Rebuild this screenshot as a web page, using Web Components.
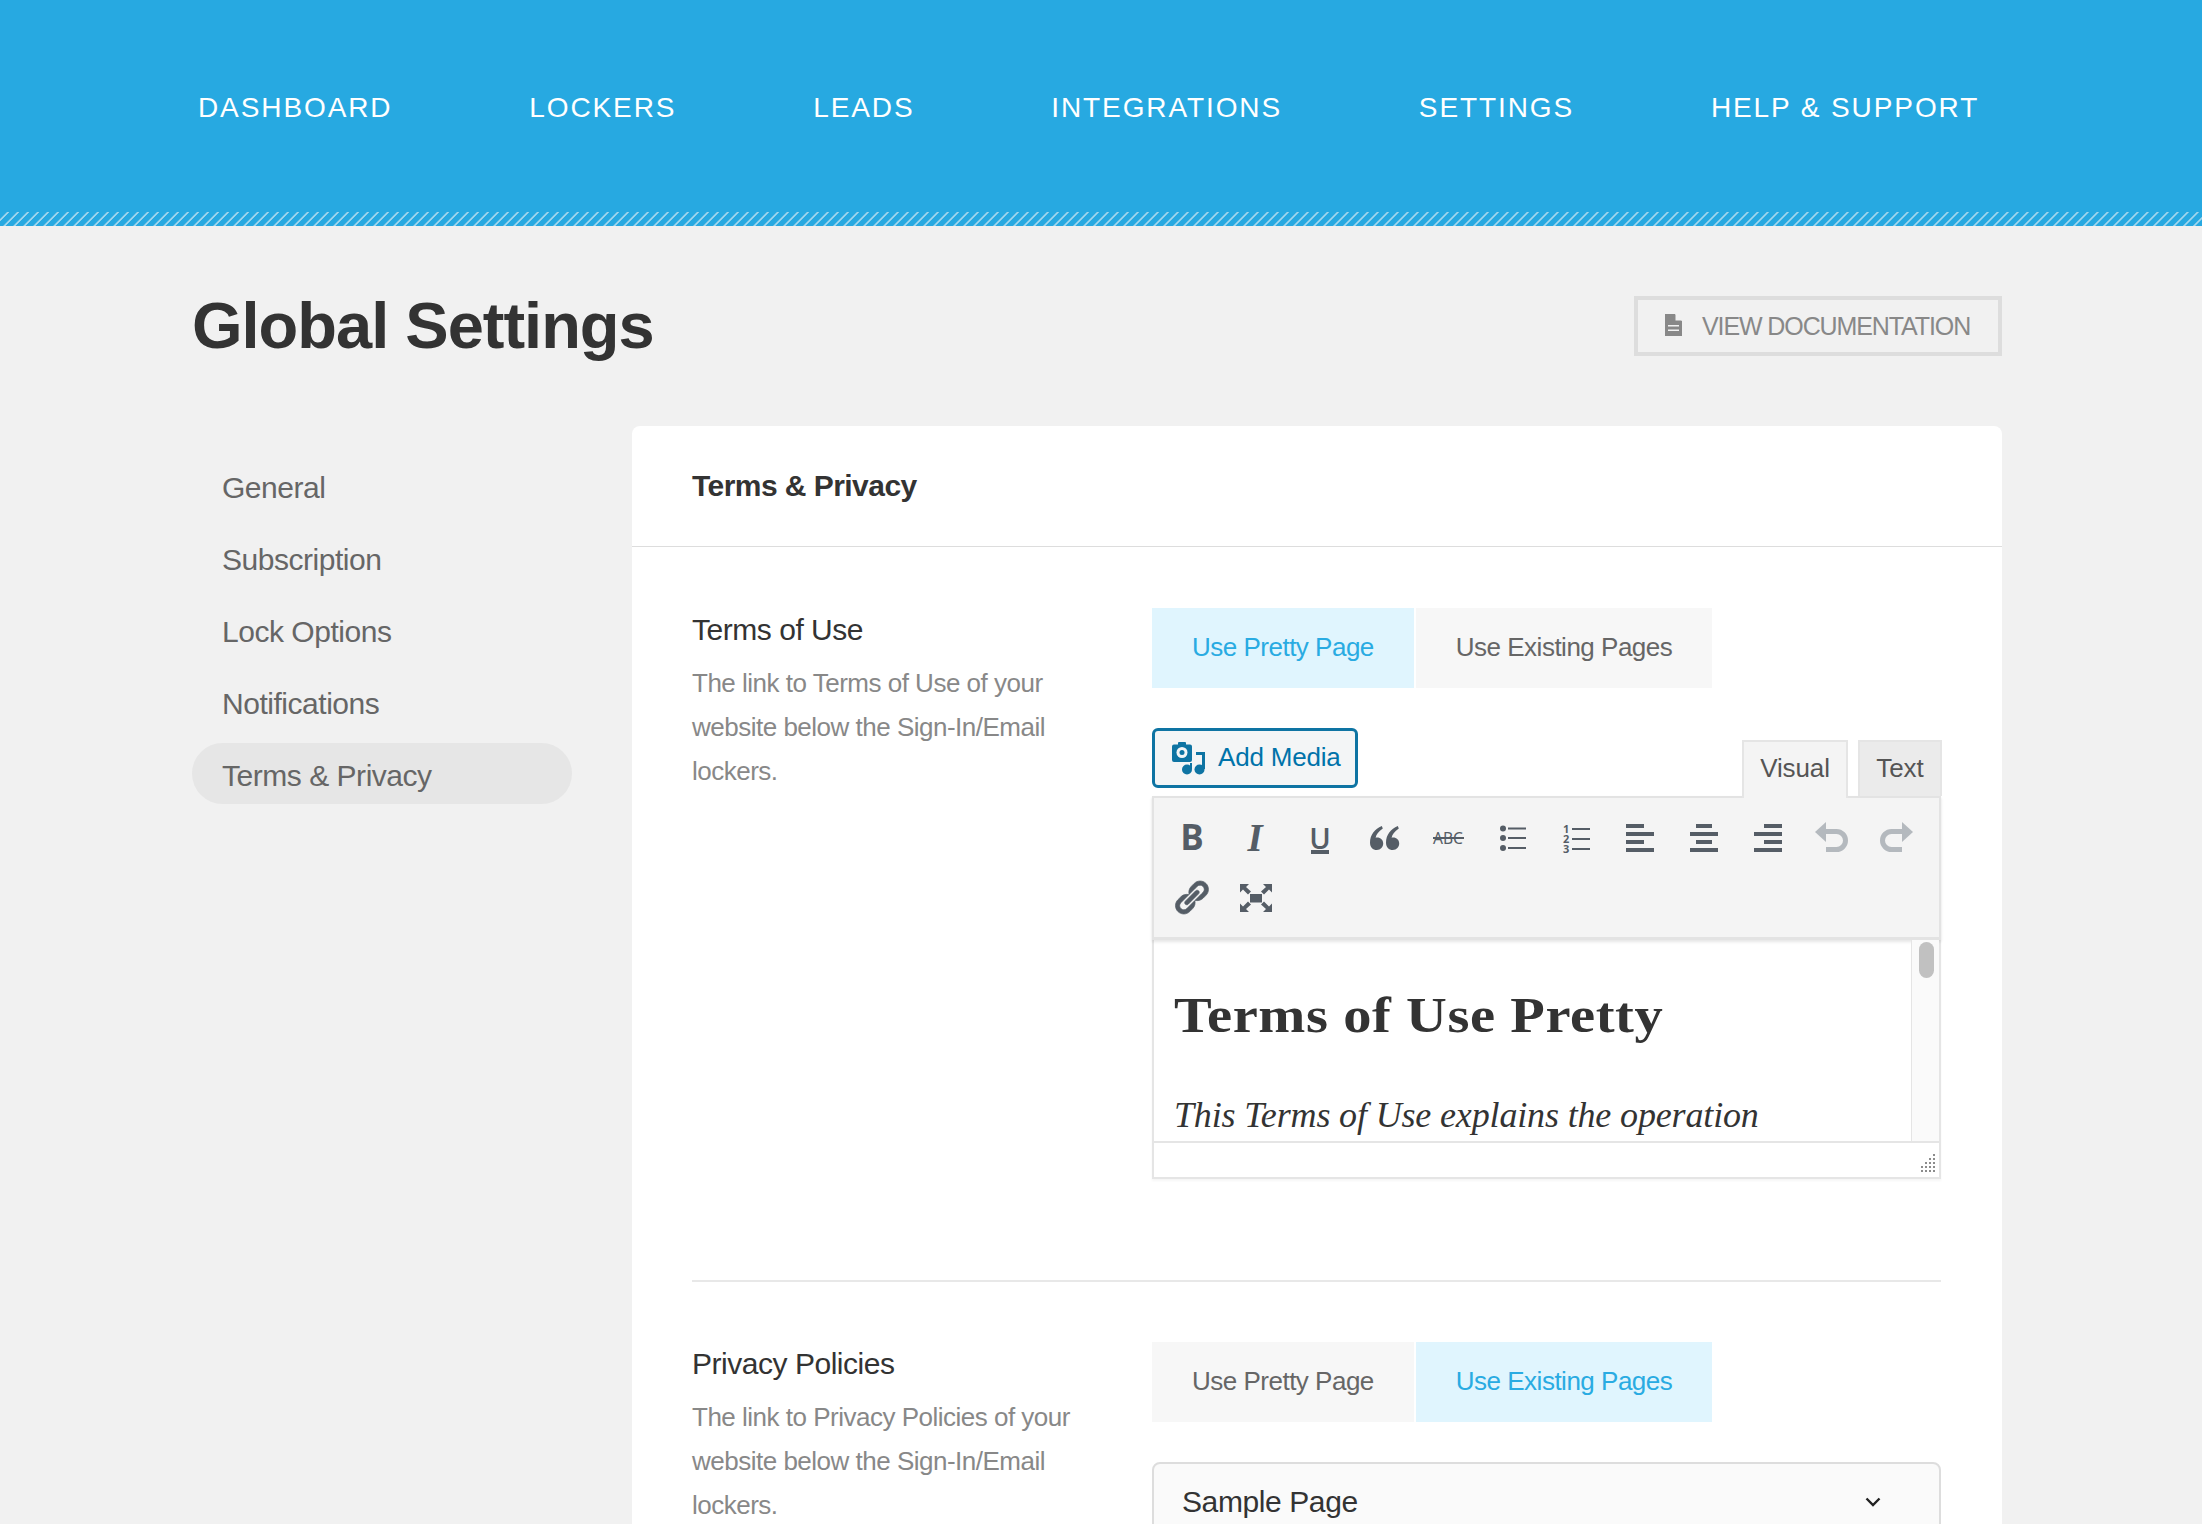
<!DOCTYPE html>
<html>
<head>
<meta charset="utf-8">
<title>Global Settings</title>
<style>
  html, body { margin: 0; height: 1524px; overflow: hidden; background: #f1f1f1; }
  body { font-family: "Liberation Sans", Arial, sans-serif; color: #333; }
</style>
</head>
<body>
<site-header></site-header>
<page-main>
  <page-title slot="title" doc-label="VIEW DOCUMENTATION">Global Settings</page-title>
  <side-menu slot="menu"></side-menu>
  <settings-card slot="card" heading="Terms &amp; Privacy">
    <setting-row label="Terms of Use" desc="The link to Terms of Use of your website below the Sign-In/Email lockers.">
      <choice-tabs active="0"></choice-tabs>
      <wp-editor></wp-editor>
    </setting-row>
    <setting-row label="Privacy Policies" desc="The link to Privacy Policies of your website below the Sign-In/Email lockers." divider>
      <choice-tabs active="1"></choice-tabs>
      <page-select value="Sample Page"></page-select>
    </setting-row>
  </settings-card>
</page-main>

<script>
/**
 * Top bar with the main navigation and the striped lower edge
 */
class SiteHeader extends HTMLElement {
  connectedCallback() {
    const items = ['DASHBOARD', 'LOCKERS', 'LEADS', 'INTEGRATIONS', 'SETTINGS', 'HELP & SUPPORT'];
    this.attachShadow({ mode: 'open' }).innerHTML = `
      <style>
        :host { display: block; background: #27a9e1; }
        nav {
          height: 212px;
          padding: 3px 0 0 198px;
          display: flex;
          align-items: center;
          gap: 136.8px;
          box-sizing: border-box;
        }
        a {
          color: #fff;
          font-size: 28px;
          letter-spacing: 1.9px;
          white-space: nowrap;
        }
        .stripes {
          height: 14px;
          background: repeating-linear-gradient(135deg, #27a9e1 0, #27a9e1 4.6px, #a3d6ec 5.4px, #a3d6ec 6.3px, #27a9e1 7.07px);
        }
      </style>
      <nav>${items.map((item) => `<a>${item.replace('&', '&amp;')}</a>`).join('')}</nav>
      <div class="stripes"></div>
    `;
  }
}

/**
 * Page body: title on top, then menu and card side by side
 */
class PageMain extends HTMLElement {
  constructor() {
    super();
    this.attachShadow({ mode: 'open' }).innerHTML = `
      <style>
        :host { display: block; padding: 70px 200px 0 192px; }
        .columns {
          display: grid;
          grid-template-columns: 380px 1370px;
          column-gap: 60px;
          margin-top: 70px;
          align-items: start;
        }
      </style>
      <slot name="title"></slot>
      <div class="columns">
        <slot name="menu"></slot>
        <slot name="card"></slot>
      </div>
    `;
  }
}

class PageTitle extends HTMLElement {
  connectedCallback() {
    const label = this.getAttribute('doc-label');
    this.attachShadow({ mode: 'open' }).innerHTML = `
      <style>
        :host { display: flex; justify-content: space-between; align-items: center; height: 60px; }
        h1 { margin: 0; font-size: 65px; line-height: 60px; color: #333; letter-spacing: -1px; }
        a {
          box-sizing: border-box;
          width: 368px;
          height: 60px;
          border: 4px solid #ddd;
          display: flex;
          align-items: center;
          padding-left: 27px;
          gap: 20px;
          color: #888;
          font-size: 25px;
          letter-spacing: -1.1px;
          white-space: nowrap;
        }
        svg { flex: none; margin-top: -2px; }
      </style>
      <h1><slot></slot></h1>
      <a>
        <svg width="17" height="22" viewBox="0 0 17 22">
          <path fill="#888" d="M0 0h10l7 7v15H0z"/>
          <path fill="#f1f1f1" d="M10.5 0v6.500H17V5.600L11.500 0zM3 11h11v1.600H3zM3 15.500h11v1.600H3z"/>
        </svg>
        ${label}
      </a>
    `;
  }
}

class SideMenu extends HTMLElement {
  connectedCallback() {
    const items = ['General', 'Subscription', 'Lock Options', 'Notifications', 'Terms & Privacy'];
    this.attachShadow({ mode: 'open' }).innerHTML = `
      <style>
        :host { display: flex; flex-direction: column; gap: 11px; padding-top: 29px; }
        a {
          height: 61px;
          line-height: 65px;
          padding-left: 30px;
          border-radius: 31px;
          color: #666;
          font-size: 30px;
          letter-spacing: -0.47px;
        }
        a.active { background: #e6e6e6; }
      </style>
      ${items
        .map((item, i) => `<a class="${i === 4 ? 'active' : ''}">${item.replace('&', '&amp;')}</a>`)
        .join('')}
    `;
  }
}

class SettingsCard extends HTMLElement {
  connectedCallback() {
    this.attachShadow({ mode: 'open' }).innerHTML = `
      <style>
        :host { display: block; background: #fff; border-radius: 8px 8px 0 0; }
        header {
          height: 121px;
          box-sizing: border-box;
          padding: 0 60px;
          display: flex;
          align-items: center;
          font-size: 30px;
          font-weight: bold;
          letter-spacing: -0.55px;
          color: #333;
          border-bottom: 1px solid #ddd;
        }
        .body { padding: 0 61px 0 60px; }
      </style>
      <header>${this.getAttribute('heading').replace('&', '&amp;')}</header>
      <div class="body"><slot></slot></div>
    `;
  }
}

class SettingRow extends HTMLElement {
  connectedCallback() {
    this.attachShadow({ mode: 'open' }).innerHTML = `
      <style>
        :host {
          display: grid;
          grid-template-columns: 460px 789px;
          padding: 60px 0 101px;
        }
        :host([divider]) { border-top: 2px solid #e8e8e8; padding-top: 59px; }
        h3 {
          margin: 0 0 8px;
          font-size: 30px;
          font-weight: normal;
          line-height: 46px;
          letter-spacing: -0.47px;
          color: #333;
        }
        p {
          margin: 0;
          width: 400px;
          font-size: 26px;
          line-height: 44px;
          letter-spacing: -0.5px;
          color: #888;
        }
        .controls { display: flex; flex-direction: column; }
      </style>
      <div class="about">
        <h3>${this.getAttribute('label')}</h3>
        <p>${this.getAttribute('desc')}</p>
      </div>
      <div class="controls"><slot></slot></div>
    `;
  }
}

class ChoiceTabs extends HTMLElement {
  connectedCallback() {
    const active = Number(this.getAttribute('active'));
    const labels = ['Use Pretty Page', 'Use Existing Pages'];
    this.attachShadow({ mode: 'open' }).innerHTML = `
      <style>
        :host { display: flex; gap: 2px; margin-top: 1px; }
        button {
          all: unset;
          height: 80px;
          padding: 0 40px 2px;
          box-sizing: border-box;
          background: #f7f7f7;
          color: #666;
          font-size: 26px;
          letter-spacing: -0.5px;
          white-space: nowrap;
        }
        button.on { background: #e0f5fe; color: #29abe2; }
      </style>
      ${labels.map((l, i) => `<button class="${i === active ? 'on' : ''}">${l}</button>`).join('')}
    `;
  }
}

// Toolbar icons, drawn in a 28x28 box
const TOOL_ICONS = {
  bold: `<text x="14" y="26" text-anchor="middle" font-family="Open Sans" font-weight="700" font-size="35">B</text>`,
  italic: `<text x="13" y="27" text-anchor="middle" font-family="Liberation Serif" font-weight="700" font-style="italic" font-size="39">I</text>`,
  underline: `<text x="14" y="25" text-anchor="middle" font-family="Open Sans" font-weight="600" font-size="29">U</text><rect x="5" y="26" width="18" height="4"/>`,
  quote: `<g transform="translate(-5.600 -6) scale(2)"><path d="M8.700 4C5.200 5.600 2.800 8.400 2.800 12.200c0 2.400 1.400 3.800 3.400 3.800 1.900 0 3.200-1.400 3.200-3.200 0-1.800-1.300-3-3-3-.3 0-.6 0-.8.1.3-1.600 1.500-3.200 3.600-4.600z"/><path transform="translate(8 0)" d="M8.700 4C5.200 5.600 2.800 8.400 2.800 12.200c0 2.400 1.400 3.800 3.400 3.800 1.900 0 3.200-1.400 3.200-3.200 0-1.800-1.300-3-3-3-.3 0-.6 0-.8.1.3-1.600 1.500-3.200 3.600-4.600z"/></g>`,
  strike: `<text x="14" y="20" text-anchor="middle" font-family="Noto Sans" font-size="17" textLength="30" lengthAdjust="spacingAndGlyphs">ABC</text><rect x="-1" y="13" width="31" height="2"/>`,
  bullets: `<circle cx="5" cy="4.500" r="3"/><circle cx="5" cy="14" r="3"/><circle cx="5" cy="24" r="3"/><rect x="10" y="3.500" width="18" height="2"/><rect x="10" y="13" width="18" height="2"/><rect x="10" y="23" width="18" height="2"/>`,
  numbers: `<text x="1 1 1" y="9 19 29" font-family="Open Sans" font-weight="700" font-size="11">123</text><rect x="10" y="4" width="18" height="2"/><rect x="10" y="14" width="18" height="2"/><rect x="10" y="24" width="18" height="2"/>`,
  left: `<path d="M0 0h18v4H0zM0 8h28v4H0zM0 16h18v4H0zM0 24h28v4H0z"/>`,
  center: `<path d="M6 0h16v4H6zM0 8h28v4H0zM6 16h16v4H6zM0 24h28v4H0z"/>`,
  right: `<path d="M10 0h18v4H10zM0 8h28v4H0zM10 16h18v4H10zM0 24h28v4H0z"/>`,
  undo: `<g fill="#b4b9be"><path d="M-3 8 8-2v20z"/><path fill="none" stroke="#b4b9be" stroke-width="5" d="M8 7.500h10.500a9 9 0 0 1 0 18H8"/></g>`,
  redo: `<g fill="#b4b9be" transform="translate(28 0) scale(-1 1)"><path d="M-3 8 8-2v20z"/><path fill="none" stroke="#b4b9be" stroke-width="5" d="M8 7.500h10.500a9 9 0 0 1 0 18H8"/></g>`,
  link: `<path stroke="#555d66" stroke-width=".35" transform="translate(-6.400 -5.900) scale(1.94)" d="M17.740 2.760c1.680 1.690 1.680 4.410 0 6.100l-1.530 1.520c-1.120 1.120-2.700 1.470-4.140 1.090l2.620-2.610.76-.77.76-.76c.84-.84.84-2.200 0-3.040-.84-.85-2.200-.85-3.040 0l-.77.76-3.380 3.380c-.37-1.440-.02-3.020 1.100-4.140l1.520-1.530c1.690-1.680 4.420-1.680 6.100 0zM8.590 13.430l5.340-5.340c.42-.42.42-1.100 0-1.520-.44-.43-1.130-.39-1.530 0l-5.330 5.340c-.42.42-.42 1.100 0 1.520.44.43 1.130.39 1.520 0zm-.76 2.290l4.140-4.150c.38 1.440.03 3.020-1.090 4.140l-1.520 1.530c-1.690 1.680-4.410 1.680-6.100 0-1.680-1.680-1.680-4.420 0-6.100l1.530-1.520c1.120-1.120 2.700-1.470 4.140-1.100l-4.140 4.150c-.85.84-.85 2.200 0 3.050.84.84 2.200.84 3.040 0z"/>`,
  fullscreen: `<g transform="translate(-2 0)"><rect x="10" y="10" width="12" height="8.500"/><path d="M0 0h9L6 3l5 4.500-3 3-5-5-3 3z"/><path transform="translate(32 0) scale(-1 1)" d="M0 0h9L6 3l5 4.500-3 3-5-5-3 3z"/><path transform="translate(0 28) scale(1 -1)" d="M0 0h9L6 3l5 4.500-3 3-5-5-3 3z"/><path transform="translate(32 28) scale(-1 -1)" d="M0 0h9L6 3l5 4.500-3 3-5-5-3 3z"/></g>`,
};

/**
 * WordPress style editor: media button, visual/text tabs, toolbar and content
 */
class WpEditor extends HTMLElement {
  connectedCallback() {
    const rows = [
      ['bold', 'italic', 'underline', 'quote', 'strike', 'bullets', 'numbers', 'left', 'center', 'right', 'undo', 'redo'],
      ['link', 'fullscreen'],
    ];
    const icon = (name) =>
      `<span class="tool"><svg width="28" height="28" viewBox="0 0 28 28" fill="#555d66">${TOOL_ICONS[name]}</svg></span>`;
    this.attachShadow({ mode: 'open' }).innerHTML = `
      <style>
        :host { display: block; margin-top: 40px; }
        .top { display: flex; justify-content: space-between; align-items: flex-end; height: 68px; }
        .media {
          box-sizing: border-box;
          height: 60px;
          width: 206px;
          margin-bottom: 8px;
          border: 3px solid #0e74a3;
          border-radius: 6px;
          background: #f3f5f6;
          color: #0073aa;
          display: flex;
          align-items: center;
          padding: 0 0 2px 16px;
          gap: 13px;
          font-size: 26px;
          letter-spacing: -0.2px;
          white-space: nowrap;
        }
        .media svg { margin-top: 2px; }
        .modes { display: flex; gap: 10px; position: relative; z-index: 1; margin-right: -1px; }
        .modes span {
          box-sizing: border-box;
          height: 56px;
          padding-bottom: 2px;
          display: flex;
          align-items: center;
          justify-content: center;
          border: 2px solid #e5e5e5;
          border-bottom: 0;
          color: #555;
          font-size: 26px;
          letter-spacing: -0.1px;
        }
        .modes .visual { width: 106px; background: #f4f4f4; height: 58px; margin-bottom: -2px; padding-bottom: 4px; }
        .modes .text { width: 84px; background: #ebebeb; }
        .box { border: 2px solid #e5e5e5; border-top: 0; box-shadow: 0 2px 2px rgba(0, 0, 0, 0.04); }
        .toolbar {
          margin: 0 -2px;
          background: #f4f4f4;
          border: 2px solid #e3e3e3;
          border-bottom-width: 3px;
          padding: 10px 0 9px 6px;
          height: 120px;
          display: flex;
          flex-direction: column;
          box-shadow: 0 2px 3px rgba(0, 0, 0, 0.1);
          position: relative;
        }
        .row { display: flex; height: 60px; }
        .tool { width: 64px; height: 60px; display: flex; align-items: center; justify-content: center; }
        svg { overflow: visible; }
        .content { display: flex; height: 201px; background: #fff; }
        .page { flex: 1; min-width: 0; padding-left: 20px; color: #333; font-family: "Liberation Serif", Georgia, serif; overflow: hidden; }
        .page h1 {
          margin: 46px 0 0;
          font-size: 50px;
          line-height: 58px;
          letter-spacing: 0.5px;
          white-space: nowrap;
          transform: scaleX(1.13);
          transform-origin: left;
        }
        .page p { margin: 51px 0 0; font-size: 36px; line-height: 40px; font-style: italic; letter-spacing: -0.15px; white-space: nowrap; }
        .scroll { width: 28px; background: #fafafa; border-left: 1px solid #e5e5e5; position: relative; box-sizing: border-box; }
        .thumb { position: absolute; left: 7px; top: 2px; width: 15px; height: 36px; border-radius: 8px; background: #c1c1c1; }
        .status {
          box-sizing: border-box;
          height: 36px;
          border-top: 2px solid #e5e5e5;
          background: #fff;
          display: flex;
          justify-content: flex-end;
          align-items: flex-end;
          padding: 0 3px 5px 0;
        }
      </style>
      <div class="top">
        <a class="media">
          <svg width="34" height="34" viewBox="0 0 34 34" fill="#0e74a3">
            <path d="M3 3.500h4V2a1 1 0 0 1 1-1h6a1 1 0 0 1 1 1v1.500h4a2 2 0 0 1 2 2V19a2 2 0 0 1-2 2H3a2 2 0 0 1-2-2V5.500a2 2 0 0 1 2-2z"/>
            <circle cx="11" cy="11.500" r="5.500" fill="#f3f5f6"/>
            <circle cx="11" cy="11.500" r="2.500"/>
            <circle cx="16" cy="28.500" r="5"/>
            <circle cx="28.500" cy="28.500" r="5"/>
            <path d="M19 22h2v6h-2zM31 11h3v17h-3zM25 11h6v3h-6z"/>
          </svg>
          Add Media
        </a>
        <div class="modes"><span class="visual">Visual</span><span class="text">Text</span></div>
      </div>
      <div class="box">
        <div class="toolbar">
          ${rows.map((r) => `<div class="row">${r.map(icon).join('')}</div>`).join('')}
        </div>
        <div class="content">
          <div class="page">
            <h1>Terms of Use Pretty</h1>
            <p>This Terms of Use explains the operation</p>
          </div>
          <div class="scroll"><div class="thumb"></div></div>
        </div>
        <div class="status">
          <svg width="18" height="18" viewBox="0 0 18 18" fill="#8c8c8c">
            <path d="M15 0h2v2h-2zM15 4h2v2h-2zM11 4h2v2h-2zM15 8h2v2h-2zM11 8h2v2h-2zM7 8h2v2H7zM15 12h2v2h-2zM11 12h2v2h-2zM7 12h2v2H7zM3 12h2v2H3zM15 16h2v2h-2zM11 16h2v2h-2zM7 16h2v2H7zM3 16h2v2H3z"/>
          </svg>
        </div>
      </div>
    `;
  }
}

class PageSelect extends HTMLElement {
  connectedCallback() {
    this.attachShadow({ mode: 'open' }).innerHTML = `
      <style>
        :host {
          display: flex;
          align-items: center;
          justify-content: space-between;
          box-sizing: border-box;
          height: 80px;
          margin-top: 40px;
          padding: 0 58px 0 28px;
          background: #fafafa;
          border: 2px solid #ddd;
          border-radius: 8px;
          font-size: 30px;
          letter-spacing: -0.4px;
          color: #333;
        }
      </style>
      <span>${this.getAttribute('value')}</span>
      <svg width="16" height="10" viewBox="0 0 16 10" fill="none" stroke="#222" stroke-width="2.400"><path d="M1.500 1.500 8 8l6.500-6.500"/></svg>
    `;
  }
}

customElements.define('site-header', SiteHeader);
customElements.define('page-main', PageMain);
customElements.define('page-title', PageTitle);
customElements.define('side-menu', SideMenu);
customElements.define('settings-card', SettingsCard);
customElements.define('setting-row', SettingRow);
customElements.define('choice-tabs', ChoiceTabs);
customElements.define('wp-editor', WpEditor);
customElements.define('page-select', PageSelect);
</script>
</body>
</html>
